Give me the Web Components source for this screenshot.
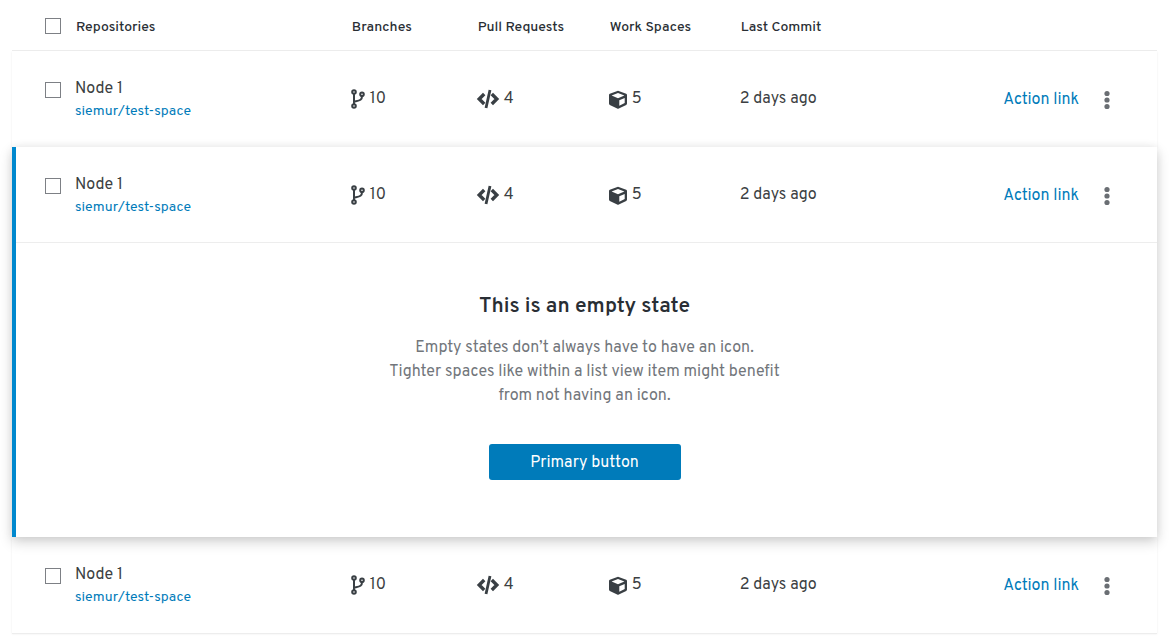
<!DOCTYPE html>
<html lang="en">
<head>
<meta charset="utf-8">
<meta name="viewport" content="width=device-width, initial-scale=1">
<title>Repositories</title>
<style>
  body { margin: 0; padding: 0 12px 4px; background: #fff; color: #3c3f42; font: 16px/24px Overpass, Roboto, sans-serif; }
</style>
</head>
<body>
<repo-table>
  <empty-state>
    <span slot="title">This is an empty state</span>
    Empty states don’t always have to have an icon.<br>Tighter spaces like within a list view item might benefit<br>from not having an icon.
    <span slot="action">Primary button</span>
  </empty-state>
</repo-table>

<script>
const ICONS = {
  branch: ['0 0 14 20', `<g fill="none" stroke="currentColor" stroke-width="2"><circle cx="3" cy="3" r="1.8"/><circle cx="3" cy="17" r="1.8"/><circle cx="11" cy="5.2" r="1.8"/><path d="M3 5v10M11 7.2c0 4.2-2.6 4.2-8 5.6"/></g>`],
  code: ['0 0 22 20', `<g fill="none" stroke="currentColor" stroke-width="3.4"><path d="M7.2 5 2.2 10l5 5M14.8 5l5 5-5 5"/><path stroke-width="2.8" d="M13 1 9 19"/></g>`],
  cube: ['0 -1 18 20', `<path fill="currentColor" fill-rule="evenodd" d="M9 .8 17.2 3.8Q18 4.1 18 5V13.6q0 .9-.8 1.3L9.8 18.5q-.8.4-1.6 0L.8 14.9Q0 14.5 0 13.6V5q0-.9.8-1.2ZM9 3.1 2.6 5.5 9 8.2l6.4-2.7ZM10.3 10.2v5.6l5.4-2.7V7.9Z"/>`]
};

customElements.define('icon-count', class extends HTMLElement {
  connectedCallback() {
    const [box, shape] = ICONS[this.getAttribute('icon')];
    const [, , w, h] = box.split(' ');
    this.attachShadow({ mode: 'open' }).innerHTML = `
      <style>
        :host { display: flex; align-items: center; gap: 5px; }
        svg { flex: none; overflow: visible; color: #393f44; }
      </style>
      <svg width="${w}" height="${h}" viewBox="${box}" aria-hidden="true">${shape}</svg><span><slot></slot></span>`;
  }
});

customElements.define('row-actions', class extends HTMLElement {
  connectedCallback() {
    this.attachShadow({ mode: 'open' }).innerHTML = `
      <style>
        :host { display: flex; justify-content: flex-end; align-items: center; gap: 16px; padding-right: 38px; }
        a { padding-top: 2px; color: #007bba; text-decoration: none; }
        button { display: flex; justify-content: center; width: 24px; padding: 2px 0 0; border: 0; background: none; color: #6a6e73; }
      </style>
      <a href="#"><slot></slot></a>
      <button aria-label="More actions"><svg width="6" height="20" viewBox="0 0 6 20" fill="currentColor"><circle cx="3" cy="3.5" r="2.6"/><circle cx="3" cy="10" r="2.6"/><circle cx="3" cy="16.5" r="2.6"/></svg></button>`;
  }
});

customElements.define('select-box', class extends HTMLElement {
  connectedCallback() {
    this.attachShadow({ mode: 'open' }).innerHTML = `
      <style>
        :host { display: block; height: 16px; }
        input { appearance: none; box-sizing: border-box; display: block; width: 16px; height: 16px; margin: 0; border: 1px solid #7d8085; background: #fff; }
        input:checked { background: #007bba; }
      </style>
      <input type="checkbox" aria-label="${this.getAttribute('label')}">`;
  }
});

customElements.define('empty-state', class extends HTMLElement {
  connectedCallback() {
    this.attachShadow({ mode: 'open' }).innerHTML = `
      <style>
        :host { display: flex; flex-direction: column; align-items: center; padding: 50px 0 57px; text-align: center; }
        h2 { margin: 0 0 15px; font-size: 21px; line-height: 28px; font-weight: 600; color: #292e34; }
        p { margin: 0 0 36px; color: #72767b; }
        button { width: 192px; height: 36px; padding: 2px 0 0; border: 0; border-radius: 3px; background: #007bba; color: #fff; font: inherit; }
      </style>
      <h2><slot name="title"></slot></h2>
      <p><slot></slot></p>
      <button><slot name="action"></slot></button>`;
  }
});

customElements.define('repo-table', class extends HTMLElement {
  row() {
    return `<tr>
      <td class="check"><select-box label="Select Node 1"></select-box></td>
      <td class="name">Node 1<a href="#">siemur/test-space</a></td>
      <td><icon-count icon="branch">10</icon-count></td>
      <td><icon-count icon="code">4</icon-count></td>
      <td><icon-count icon="cube">5</icon-count></td>
      <td>2 days ago</td>
      <td><row-actions>Action link</row-actions></td>
    </tr>`;
  }
  connectedCallback() {
    this.attachShadow({ mode: 'open' }).innerHTML = `
      <style>
        :host { display: block; }
        table { width: 100%; table-layout: fixed; border-spacing: 0; }
        .c-check { width: 63px; } .c-name { width: 24%; } .c-branch { width: 126px; }
        .c-stat { width: 132px; } .c-work { width: 131px; } .c-date { width: 160px; }
        th, td { box-sizing: border-box; }
        th { height: 51px; padding: 6px 0 0 1px; border-bottom: 1px solid #ededed; text-align: left; font-size: 14px; line-height: 20px; font-weight: 500; color: #292e34; }
        td { height: 96px; padding: 0; }
        th:nth-child(n+3) { padding-left: 2px; }
        td:nth-child(n+3) { padding-left: 1px; }
        th.check { padding: 2px 0 0 33px; }
        td.check { padding: 0 0 18px 33px; }
        td.name { padding-top: 2px; }
        .name a { display: block; font-size: 14px; line-height: 22px; color: #007bba; text-decoration: none; }
        tbody { box-shadow: 0 1px 2px rgba(3, 3, 3, .08); }
        tbody:last-child td { box-shadow: 0 1px #ededed; }
        .open { position: relative; background: #fff; box-shadow: 0 5px 12px rgba(3, 3, 3, .18), 0 0 8px rgba(3, 3, 3, .06); }
        .open tr:first-child td { box-shadow: inset 0 -1px #ededed; }
        .open tr:first-child td:first-child { box-shadow: inset 4px 0 #0088ce, inset 0 -1px #ededed; }
        .open .detail { height: auto; box-shadow: inset 4px 0 #0088ce; }
      </style>
      <table>
        <colgroup><col class="c-check"><col class="c-name"><col class="c-branch"><col class="c-stat"><col class="c-work"><col class="c-date"><col></colgroup>
        <thead><tr>
          <th class="check"><select-box label="Select all"></select-box></th>
          <th>Repositories</th><th>Branches</th><th>Pull Requests</th><th>Work Spaces</th><th>Last Commit</th><th></th>
        </tr></thead>
        <tbody>${this.row()}</tbody>
        <tbody class="open">${this.row()}<tr><td class="detail" colspan="7"><slot></slot></td></tr></tbody>
        <tbody>${this.row()}</tbody>
      </table>`;
  }
});
</script>
</body>
</html>
